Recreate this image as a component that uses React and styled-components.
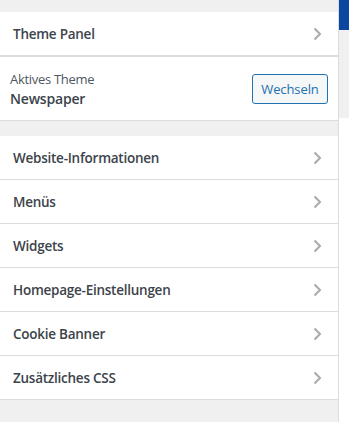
import React from 'react';
import styled, { createGlobalStyle } from 'styled-components';

const Global = createGlobalStyle`
  html, body {
    margin: 0;
    padding: 0;
    background: #fff;
  }
  body {
    font-family: "Open Sans", "Noto Sans", sans-serif;
  }
`;

const Layout = styled.div`
  display: flex;
  width: 349px;
  height: 422px;
  overflow: hidden;
`;

const Panel = styled.div`
  width: 338px;
  background: #f0f0f1;
  border-right: 1px solid #dcdcde;
  padding-top: 12px;
  box-sizing: content-box;
`;

const Scrollbar = styled.div`
  flex: 1;
  display: flex;
  flex-direction: column;
`;

const Thumb = styled.div`
  height: 30px;
  background: #0b46a0;
`;

const Track = styled.div`
  height: 88px;
  background: #f0f0f1;
`;

const Row = styled.div`
  display: flex;
  align-items: center;
  justify-content: space-between;
  height: 43px;
  padding: 0 16px 0 13px;
  background: #fff;
  border-bottom: 1px solid #dcdcde;
`;

const RowTitle = styled.span`
  font-size: 13.5px;
  font-weight: 600;
  color: #3c434a;
  letter-spacing: -0.25px;
`;

const ThemeInfo = styled.div`
  display: flex;
  align-items: center;
  justify-content: space-between;
  height: 63px;
  padding: 0 10px;
  background: #fff;
  border-top: 1px solid #dcdcde;
  border-bottom: 1px solid #dcdcde;
  margin-bottom: 15px;
`;

const ThemeText = styled.div`
  display: flex;
  flex-direction: column;
  line-height: 19px;
`;

const ThemeLabel = styled.span`
  font-size: 13px;
  color: #50575e;
  letter-spacing: -0.3px;
`;

const ThemeName = styled.span`
  font-size: 14px;
  font-weight: 600;
  color: #3c434a;
  letter-spacing: -0.2px;
`;

const SwitchButton = styled.button`
  width: 76px;
  height: 30px;
  border: 1px solid #2271b1;
  border-radius: 3px;
  background: #f6f7f7;
  color: #2271b1;
  font-family: inherit;
  font-size: 13px;
  letter-spacing: -0.1px;
  padding: 0;
  cursor: pointer;
`;

const List = styled.div`
  display: flex;
  flex-direction: column;
`;

const Chevron = () => (
  <svg width="10" height="16" viewBox="0 0 10 16">
    <path d="M2.5 2.5 L8 8 L2.5 13.5" fill="none" stroke="#a7aaad" strokeWidth="2" />
  </svg>
);

const sections = [
  'Website-Informationen',
  'Menüs',
  'Widgets',
  'Homepage-Einstellungen',
  'Cookie Banner',
  'Zusätzliches CSS',
];

const App = () => {
  return (
    <Layout>
      <Global />
      <Panel>
        <Row>
          <RowTitle>Theme Panel</RowTitle>
          <Chevron />
        </Row>
        <ThemeInfo>
          <ThemeText>
            <ThemeLabel>Aktives Theme</ThemeLabel>
            <ThemeName>Newspaper</ThemeName>
          </ThemeText>
          <SwitchButton>Wechseln</SwitchButton>
        </ThemeInfo>
        <List>
          {sections.map((s) => (
            <Row key={s}>
              <RowTitle>{s}</RowTitle>
              <Chevron />
            </Row>
          ))}
        </List>
      </Panel>
      <Scrollbar>
        <Thumb />
        <Track />
      </Scrollbar>
    </Layout>
  );
};

export default App;
